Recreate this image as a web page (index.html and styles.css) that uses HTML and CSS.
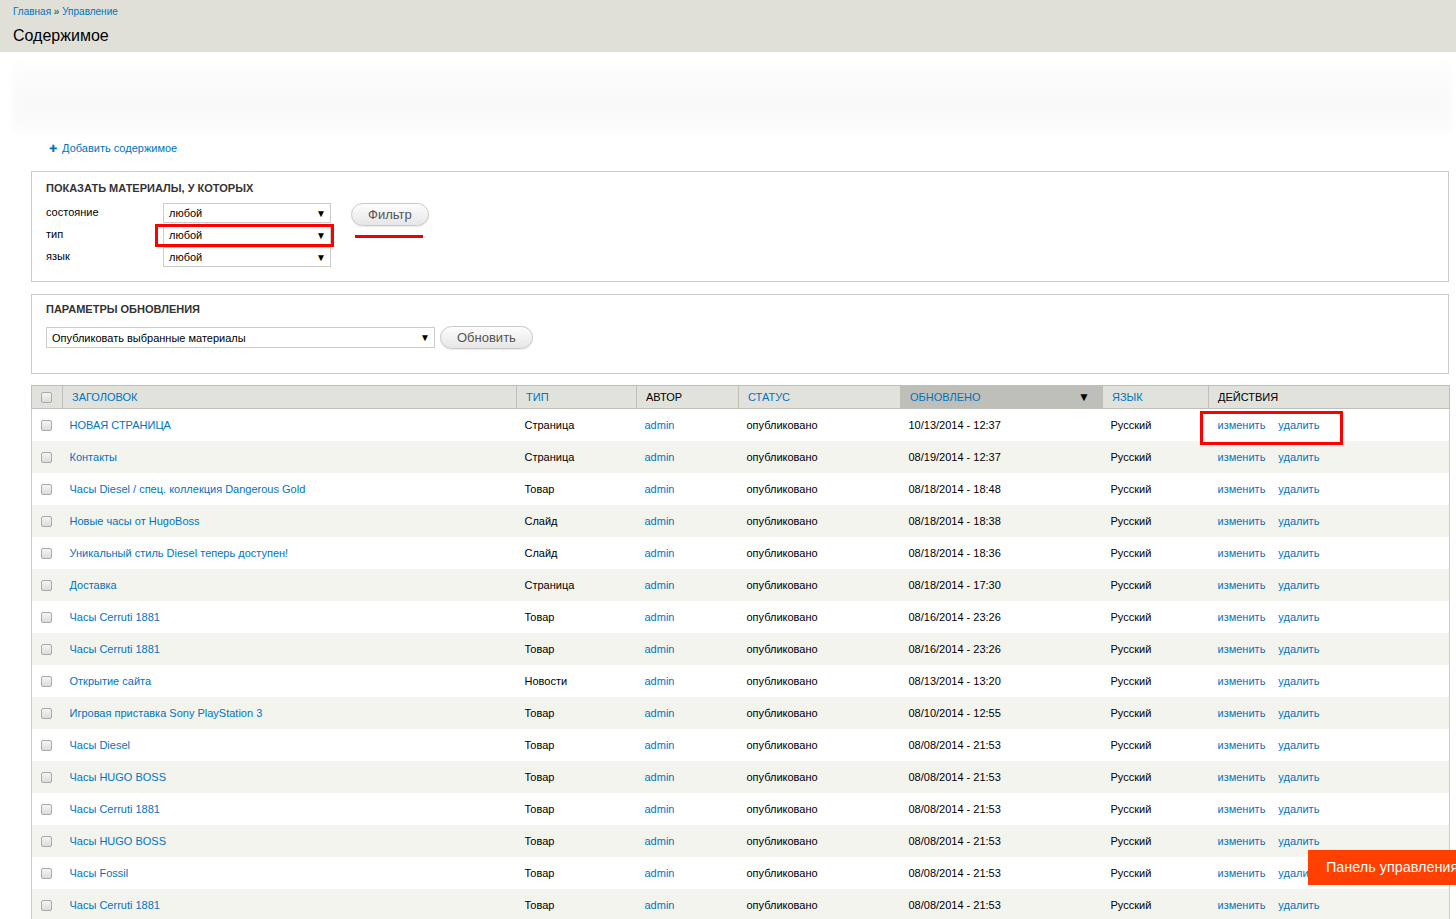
FILE: index.html
```html
<!DOCTYPE html>
<html lang="ru">
<head>
<meta charset="utf-8">
<title>Содержимое</title>
<link rel="stylesheet" href="styles.css">
</head>
<body>
<header class="page-head">
  <nav class="crumbs"><a href="#">Главная</a> » <a href="#">Управление</a></nav>
  <h1 class="page-title">Содержимое</h1>
</header>
<main class="content">
  <div class="blurred"></div>
  <ul class="action-links"><li><a href="#"><span class="plus">✚</span> Добавить содержимое</a></li></ul>

  <section class="fieldset filters">
    <h2 class="legend">ПОКАЗАТЬ МАТЕРИАЛЫ, У КОТОРЫХ</h2>
    <div class="filter-body">
      <div class="filter-grid">
        <label class="flabel">состояние</label><div class="select"><span>любой</span><i>▼</i></div>
        <label class="flabel">тип</label><div class="select marked"><span>любой</span><i>▼</i></div>
        <label class="flabel">язык</label><div class="select"><span>любой</span><i>▼</i></div>
      </div>
      <div class="btn-wrap">
        <button class="btn">Фильтр</button>
        <div class="red-line"></div>
      </div>
    </div>
  </section>

  <section class="fieldset update">
    <h2 class="legend">ПАРАМЕТРЫ ОБНОВЛЕНИЯ</h2>
    <div class="update-row">
      <div class="select wide"><span>Опубликовать выбранные материалы</span><i>▼</i></div>
      <button class="btn">Обновить</button>
    </div>
  </section>

  <table class="nodes">
    <colgroup>
      <col style="width:31px"><col style="width:454px"><col style="width:120px"><col style="width:102px">
      <col style="width:162px"><col style="width:202px"><col style="width:106px"><col style="width:241px">
    </colgroup>
    <thead>
      <tr>
        <th class="cb"><span class="check"></span></th>
        <th><a href="#">ЗАГОЛОВОК</a></th>
        <th><a href="#">ТИП</a></th>
        <th>АВТОР</th>
        <th><a href="#">СТАТУС</a></th>
        <th class="active"><a href="#">ОБНОВЛЕНО</a><i class="sort">▼</i></th>
        <th><a href="#">ЯЗЫК</a></th>
        <th>ДЕЙСТВИЯ</th>
      </tr>
    </thead>
    <tbody id="rows"></tbody>
  </table>
</main>
<a class="panel-btn" href="#">Панель управления</a>
<script src="script.js"></script>
</body>
</html>
```

FILE: script.js
```js
const data = [
  ["НОВАЯ СТРАНИЦА","Страница","10/13/2014 - 12:37"],
  ["Контакты","Страница","08/19/2014 - 12:37"],
  ["Часы Diesel / спец. коллекция Dangerous Gold","Товар","08/18/2014 - 18:48"],
  ["Новые часы от HugoBoss","Слайд","08/18/2014 - 18:38"],
  ["Уникальный стиль Diesel теперь доступен!","Слайд","08/18/2014 - 18:36"],
  ["Доставка","Страница","08/18/2014 - 17:30"],
  ["Часы Cerruti 1881","Товар","08/16/2014 - 23:26"],
  ["Часы Cerruti 1881","Товар","08/16/2014 - 23:26"],
  ["Открытие сайта","Новости","08/13/2014 - 13:20"],
  ["Игровая приставка Sony PlayStation 3","Товар","08/10/2014 - 12:55"],
  ["Часы Diesel","Товар","08/08/2014 - 21:53"],
  ["Часы HUGO BOSS","Товар","08/08/2014 - 21:53"],
  ["Часы Cerruti 1881","Товар","08/08/2014 - 21:53"],
  ["Часы HUGO BOSS","Товар","08/08/2014 - 21:53"],
  ["Часы Fossil","Товар","08/08/2014 - 21:53"],
  ["Часы Cerruti 1881","Товар","08/08/2014 - 21:53"]
];
const tb = document.getElementById("rows");
data.forEach((r, i) => {
  const tr = document.createElement("tr");
  tr.className = i % 2 ? "even" : "odd";
  tr.innerHTML =
    '<td class="cb"><span class="check"></span></td>' +
    '<td><a href="#">' + r[0] + '</a></td>' +
    '<td>' + r[1] + '</td>' +
    '<td><a href="#">admin</a></td>' +
    '<td>опубликовано</td>' +
    '<td>' + r[2] + '</td>' +
    '<td>Русский</td>' +
    '<td class="ops' + (i === 0 ? ' marked' : '') + '"><a href="#">изменить</a><a href="#">удалить</a></td>';
  tb.appendChild(tr);
});
```

FILE: styles.css
```css
html { overflow-x: hidden; }
body {
  margin: 0;
  font-family: "Liberation Sans", Arial, sans-serif;
  font-size: 11px;
  color: #000;
  background: #fff;
}
a { color: #0074bd; text-decoration: none; }

.page-head {
  background: #e0e0d8;
  height: 52px;
  padding: 0 13px;
  box-sizing: border-box;
}
.crumbs {
  font-size: 10px;
  line-height: 12px;
  padding-top: 6px;
  color: #333;
}
.page-title {
  margin: 0;
  padding-top: 8px;
  font-size: 16px;
  line-height: 20px;
  font-weight: normal;
}

.content { padding: 0 7px 0 31px; }

.blurred {
  height: 71px;
  margin: 10px -3px 0 -19px;
  background: linear-gradient(180deg, #fdfdfd, #f9f9f9 60%, #fcfcfc);
  filter: blur(4px);
}

.action-links {
  list-style: none;
  margin: 8px 0 0 18px;
  padding: 0;
  line-height: 14px;
}
.action-links a { font-size: 11px; }
.plus { font-size: 10px; margin-right: 2px; }

.fieldset {
  border: 1px solid #ccc;
  box-sizing: border-box;
}
.legend {
  margin: 0;
  font-size: 11px;
  line-height: 14px;
  font-weight: bold;
  color: #333;
}
.filters {
  margin-top: 15px;
  height: 111px;
  padding: 9px 14px 0 14px;
}
.filter-body {
  display: flex;
  align-items: flex-start;
  margin-top: 8px;
}
.filter-grid {
  display: grid;
  grid-template-columns: 117px 168px;
  row-gap: 2px;
  align-items: center;
}
.flabel { font-size: 11px; color: #000; position: relative; top: -1px; }
.select {
  height: 20px;
  box-sizing: border-box;
  border: 1px solid #ccc;
  background: #fff;
  display: flex;
  align-items: center;
  justify-content: space-between;
  padding: 0 4px 0 5px;
  font-size: 11px;
  position: relative;
}
.select i { font-style: normal; font-size: 10px; }
.select.marked::after {
  content: "";
  position: absolute;
  left: -9px; top: -2px; right: -4px; bottom: -3px;
  border: 3px solid #f00;
}
.btn-wrap { margin-left: 20px; position: relative; }
.btn {
  font-family: "Liberation Sans", Arial, sans-serif;
  font-size: 13px;
  color: #555;
  height: 23px;
  padding: 0 16px;
  border: 1px solid #c8c8c8;
  border-radius: 12px;
  background: linear-gradient(#fdfdfd, #e6e6e6);
  box-shadow: 0 1px 1px rgba(0,0,0,.08);
}
.red-line {
  width: 68px;
  height: 3px;
  background: #e00;
  margin: 9px 0 0 4px;
}

.update {
  margin-top: 12px;
  height: 80px;
  padding: 7px 14px 0 14px;
}
.update-row {
  display: flex;
  align-items: center;
  margin-top: 10px;
  gap: 5px;
}
.select.wide { width: 389px; height: 21px; }
.update .btn { padding: 0 16px; }

.nodes {
  margin-top: 11px;
  border-collapse: collapse;
  table-layout: fixed;
  width: 1418px;
  border: 1px solid #ccc;
}
.nodes th {
  background: #e1e2dc;
  height: 22px;
  padding: 0 9px;
  text-align: left;
  font-weight: normal;
  font-size: 11px;
  color: #000;
  border: 1px solid #bebfb9;
  white-space: nowrap;
}
.nodes th.active { background: #bebfb9; position: relative; }
.nodes th.active a { color: #0074bd; }
.sort {
  font-style: normal;
  font-size: 12px;
  position: absolute;
  right: 12px;
  top: 4px;
}
.nodes td {
  height: 32px;
  padding: 0 7px;
  font-size: 11px;
  white-space: nowrap;
}
.nodes td:nth-child(3),
.nodes td:nth-child(4),
.nodes td:nth-child(5),
.nodes td:nth-child(6),
.nodes td:nth-child(7) { padding-left: 8px; }
.nodes tr.odd td { background: #fff; }
.nodes tr.even td { background: #f3f4ee; }
.nodes .cb { padding: 0 0 0 9px; }
.check {
  display: block;
  width: 9px;
  height: 9px;
  border: 1px solid #a9a9a9;
  border-radius: 2px;
  background: linear-gradient(#f4f4f4, #dcdcdc);
}
.nodes td.ops { padding-left: 9px; position: relative; }
.nodes td.ops a { margin-right: 13px; }
.nodes td.ops.marked::after {
  content: "";
  position: absolute;
  z-index: 2;
  left: -9px; top: 2px;
  width: 137px; height: 28px;
  border: 3px solid #f00;
}

.panel-btn {
  position: fixed;
  z-index: 5;
  left: 1308px;
  top: 850px;
  height: 35px;
  line-height: 34px;
  padding: 0 18px;
  background: #ff4000;
  color: #fff;
  font-size: 14.4px;
  white-space: nowrap;
}
```
